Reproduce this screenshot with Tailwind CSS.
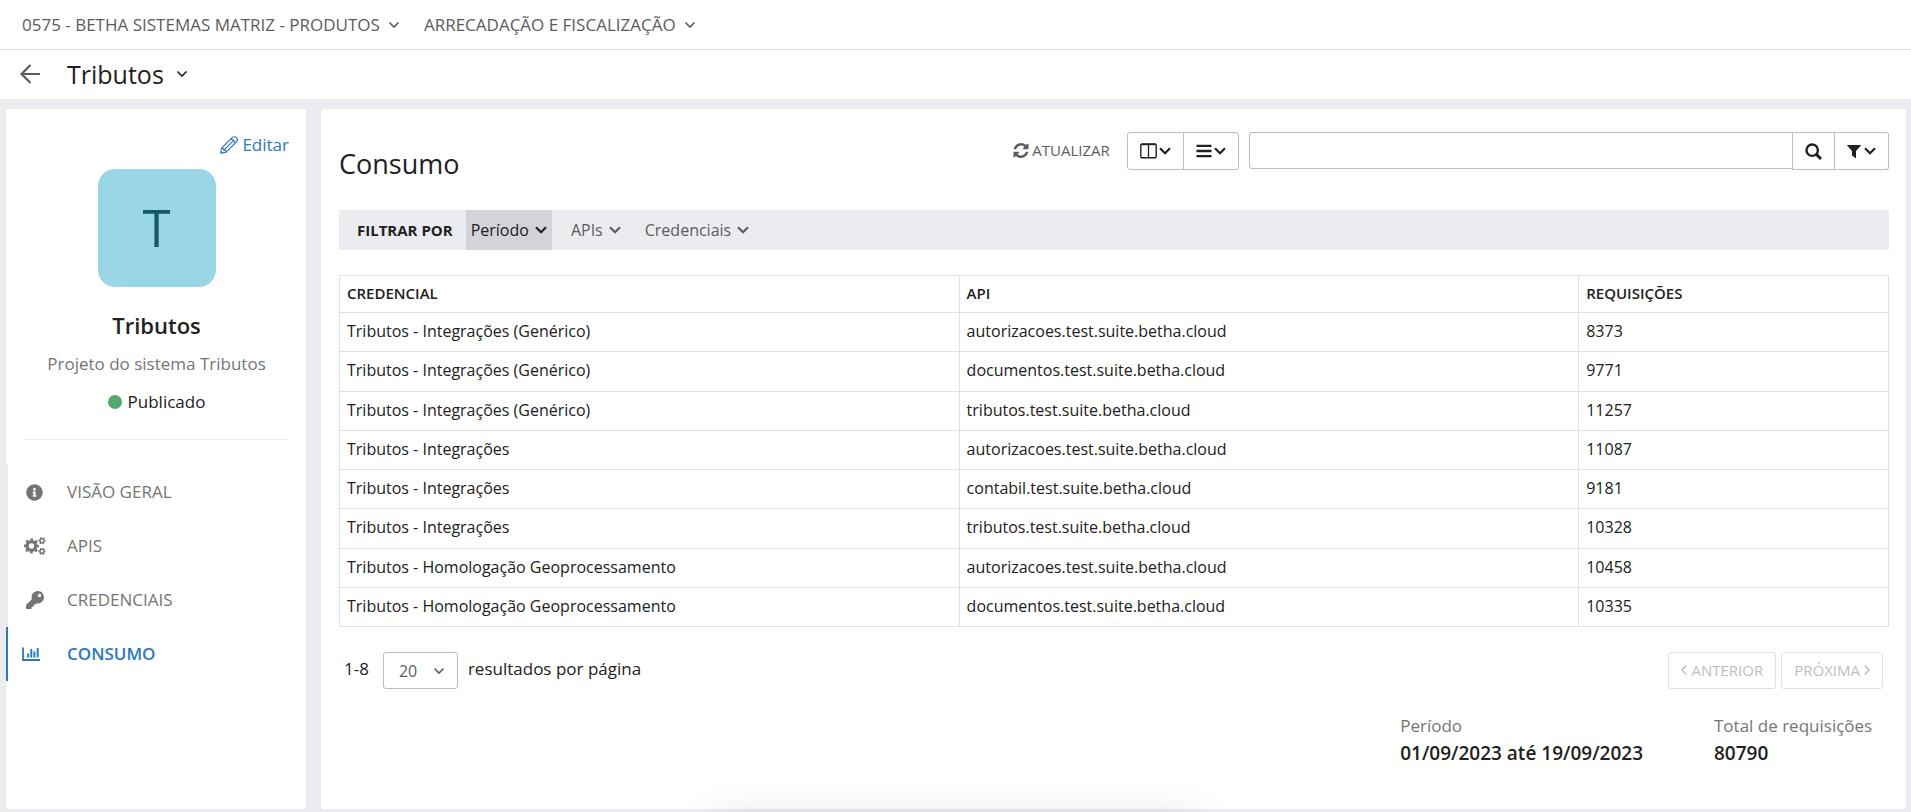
<!DOCTYPE html>
<html lang="pt-BR">
<head>
<meta charset="utf-8">
<title>Tributos - Consumo</title>
<script src="https://cdn.jsdelivr.net/npm/@tailwindcss/browser@4"></script>
</head>
<body class="flex min-h-screen flex-col bg-[#ebecf0] font-['Open_Sans',sans-serif] text-[16px] leading-6 text-[#212121]">

<svg class="hidden" aria-hidden="true">
  <symbol id="chevron" viewBox="0 0 12 8"><path d="M1 1.200l5 5 5-5" fill="none" stroke="currentColor" stroke-width="2.200"/></symbol>
  <symbol id="chevron-thin" viewBox="0 0 12 8"><path d="M1.500 1.500L6 6l4.500-4.500" fill="none" stroke="currentColor" stroke-width="1.600"/></symbol>
</svg>

<header class="bg-white">
  <nav aria-label="Contexto" class="flex h-[50px] items-center gap-6 border-b border-[#e0e0e4] px-[22px] text-[17px] text-[#5c5c5c]">
    <button type="button" class="flex items-center gap-2">0575 - BETHA SISTEMAS MATRIZ - PRODUTOS<svg class="h-2 w-3"><use href="#chevron-thin"/></svg></button>
    <button type="button" class="flex items-center gap-2">ARRECADAÇÃO E FISCALIZAÇÃO<svg class="h-2 w-3"><use href="#chevron-thin"/></svg></button>
  </nav>
  <div class="flex h-[49px] items-center px-5 pb-0.5">
    <a href="#" aria-label="Voltar" class="text-[#5c5c5c]"><svg class="h-5 w-5" viewBox="0 0 20 20" fill="none" stroke="currentColor" stroke-width="2.200"><path d="M20 10H1.500M10.500 1L1.500 10l9 9"/></svg></a>
    <button type="button" class="ml-[27px] flex items-center gap-3 text-[25px] leading-8">Tributos<svg class="h-2 w-3"><use href="#chevron-thin"/></svg></button>
  </div>
</header>

<div class="flex flex-1 gap-[15px] px-1.5 pt-2.5 pb-[3px] pr-[5px]">
  <aside class="w-[300px] shrink-0 rounded-[3px] bg-white">
    <div class="mr-[17px] ml-[18px] flex flex-col items-center border-b border-[#ebebed] pt-6 pb-[25px] text-[17px]">
      <a href="#" class="flex items-center gap-1 self-end text-[#2b78c5]"><svg class="h-[18px] w-[18px]" viewBox="0 0 18 18" fill="none" stroke="currentColor" stroke-width="1.200" stroke-linejoin="round"><path d="M.8 17.200l.8-5L12.200 1.600a2.800 2.800 0 0 1 4.200 4.200L5.800 16.400zM1.600 12.200c1.400-.2 2.300.4 2.300 1.900 1.500 0 2.200.8 1.900 2.300M3.900 14.100l9.500-9.500M10.700 3.100c2.100.2 4 2.100 4.200 4.200"/></svg>Editar</a>
      <div class="mt-3 flex h-[118px] w-[118px] items-center justify-center rounded-[17px] bg-[#9ad7e6] pb-0.5 text-[51px] leading-none text-[#17586b]">T</div>
      <h2 class="mt-[23px] text-[22px] leading-[30px] font-semibold">Tributos</h2>
      <p class="mt-3 text-[#757575]">Projeto do sistema Tributos</p>
      <p class="mt-3.5 flex items-center gap-1.5"><span class="h-3.5 w-3.5 rounded-full bg-[#54a86c]"></span>Publicado</p>
    </div>
    <nav aria-label="Projeto" class="mt-[25px] flex flex-col text-[17px] text-[#757575]">
      <a href="#" class="flex h-[54px] items-center border-l-2 border-[#ebebed] pl-4">
        <span class="flex w-[43px] pl-0.5"><svg class="h-[17px] w-[17px]" viewBox="0 0 512 512" fill="currentColor"><path d="M256 8C119.043 8 8 119.083 8 256c0 136.997 111.043 248 248 248s248-111.003 248-248C504 119.083 392.957 8 256 8zm0 110c23.196 0 42 18.804 42 42s-18.804 42-42 42-42-18.804-42-42 18.804-42 42-42zm56 254c0 6.627-5.373 12-12 12h-88c-6.627 0-12-5.373-12-12v-24c0-6.627 5.373-12 12-12h12v-64h-12c-6.627 0-12-5.373-12-12v-24c0-6.627 5.373-12 12-12h64c6.627 0 12 5.373 12 12v100h12c6.627 0 12 5.373 12 12v24z"/></svg></span>VISÃO GERAL</a>
      <a href="#" class="flex h-[54px] items-center border-l-2 border-[#ebebed] pl-4">
        <span class="flex w-[43px]"><svg class="h-[18px] w-[22px]" viewBox="0 0 22 18" fill="none" stroke="currentColor"><circle cx="7.500" cy="9" r="4.400" stroke-width="3.400"/><circle cx="7.500" cy="9" r="6.600" stroke-width="2" stroke-dasharray="2.600 2.584" stroke-dashoffset="1.300"/><circle cx="18" cy="3.700" r="2" stroke-width="1.500"/><circle cx="18" cy="3.700" r="3.100" stroke-width="1.100" stroke-dasharray="1.700 1.546" stroke-dashoffset=".85"/><circle cx="18" cy="14.300" r="2" stroke-width="1.500"/><circle cx="18" cy="14.300" r="3.100" stroke-width="1.100" stroke-dasharray="1.700 1.546" stroke-dashoffset=".85"/></svg></span>APIS</a>
      <a href="#" class="flex h-[54px] items-center border-l-2 border-[#ebebed] pl-4">
        <span class="flex w-[43px] pl-0.5"><svg class="h-[18px] w-[18px]" viewBox="0 0 512 512" fill="currentColor"><path d="M512 176.001C512 273.203 433.202 352 336 352c-11.220 0-22.190-1.062-32.827-3.069l-24.012 27.014A23.999 23.999 0 0 1 261.223 384H224v40c0 13.255-10.745 24-24 24h-40v40c0 13.255-10.745 24-24 24H24c-13.255 0-24-10.745-24-24v-78.059c0-6.365 2.529-12.470 7.029-16.971l161.802-161.802C163.108 213.814 160 195.271 160 176 160 78.798 238.797.001 335.999 0 433.488-.001 512 78.511 512 176.001zM336 128c0 26.510 21.490 48 48 48s48-21.490 48-48-21.490-48-48-48-48 21.490-48 48z"/></svg></span>CREDENCIAIS</a>
      <a href="#" aria-current="page" class="flex h-[54px] items-center border-l-2 border-[#2b78c5] pl-3.5 font-semibold text-[#2b78c5]">
        <span class="flex w-[45px]"><svg class="h-[14px] w-[18px]" viewBox="0 0 18 14" fill="none" stroke="currentColor"><path d="M1 .5V13h17" stroke-width="1.800"/><path d="M6.200 10.500V6.500M9.300 10.500V2M12.400 10.500V4.500M15.700 10.500V1" stroke-width="2"/></svg></span>CONSUMO</a>
    </nav>
  </aside>

  <main class="min-w-0 flex-1 rounded-[3px] bg-white pt-[23px] pr-[17px] pb-10 pl-[18px]">
    <div class="flex items-start">
      <h1 class="mt-3.5 mb-7 text-[27px] leading-9">Consumo</h1>
      <button type="button" class="ml-auto flex h-9 items-center gap-[3px] text-[15px] text-[#5c5c5c]"><svg class="h-[15px] w-4" viewBox="0 0 1536 1536" fill="currentColor"><path d="M1511 928q0 5-1 7-64 268-268 434.500t-478 166.500q-146 0-282.500-55t-243.500-157l-129 129q-19 19-45 19t-45-19-19-45v-448q0-26 19-45t45-19h448q26 0 45 19t19 45-19 45l-137 137q71 66 161 102t187 36q134 0 250-65t186-179q11-17 53-117 8-23 30-23h192q13 0 22.500 9.500t9.500 22.500zm25-800v448q0 26-19 45t-45 19h-448q-26 0-45-19t-19-45 19-45l138-138q-148-137-349-137-134 0-250 65t-186 179q-11 17-53 117-8 23-30 23h-199q-13 0-22.500-9.500t-9.500-22.500v-7q65-268 270-434.500t480-166.500q146 0 284 55.500t245 156.500l130-129q19-19 45-19t45 19 19 45z"/></svg>ATUALIZAR</button>
      <div class="ml-[17px] flex h-[38px] w-[112px] rounded-[3px] border border-[#bdbdbf]">
        <button type="button" aria-label="Colunas" class="flex w-14 items-center justify-center gap-0.5 border-r border-[#bdbdbf]"><svg class="h-4 w-[17px]" viewBox="0 0 17 16" fill="none" stroke="currentColor"><rect x=".8" y="1.200" width="15.400" height="13.600" rx="1" stroke-width="1.400"/><path d="M8.500 1v14" stroke-width="1.300"/><path d="M1 1.300h15" stroke-width="1.800"/></svg><svg class="h-2 w-3"><use href="#chevron"/></svg></button>
        <button type="button" aria-label="Densidade" class="flex flex-1 items-center justify-center gap-0.5"><svg class="h-4 w-4" viewBox="0 0 16 16" stroke="currentColor" stroke-width="2.300"><path d="M.5 2.800h15M.5 8h15M.5 13.200h15"/></svg><svg class="h-2 w-3"><use href="#chevron"/></svg></button>
      </div>
      <form class="ml-2.5 flex w-[41.300%] items-start" onsubmit="return false">
        <input type="search" aria-label="Pesquisar" class="h-[37px] min-w-0 flex-1 rounded-l-[3px] border border-r-0 border-[#bdbdbf] px-3 outline-none">
        <button type="submit" aria-label="Buscar" class="flex h-[38px] w-[43px] items-center justify-center border border-[#bdbdbf]"><svg class="h-[17px] w-[17px]" viewBox="0 0 17 17" fill="none" stroke="currentColor"><circle cx="7.200" cy="7.200" r="5.700" stroke-width="2.400"/><path d="M11.400 11.400l4.600 4.600" stroke-width="3"/></svg></button>
        <button type="button" aria-label="Filtros" class="flex h-[38px] w-[54px] items-center justify-center gap-[3px] rounded-r-[3px] border border-l-0 border-[#bdbdbf]"><svg class="h-[15px] w-[14px]" viewBox="0 0 14 15" fill="currentColor"><path d="M.6 1h12.800q.6.200.3.800L9 7v7.500L5 11.500V7L.3 1.800Q0 1.200.6 1z"/></svg><svg class="h-2 w-3"><use href="#chevron"/></svg></button>
      </form>
    </div>

    <div class="flex h-10 items-stretch bg-[#ebecf0] pl-[18px] text-[#5c5c5c]">
      <strong class="mr-[13px] self-center text-[15px] font-bold text-[#212121]">FILTRAR POR</strong>
      <button type="button" class="flex items-center gap-1.5 bg-[#d3d4d8] px-[5px] text-[#212121]">Período<svg class="h-2 w-3"><use href="#chevron"/></svg></button>
      <button type="button" class="ml-3.5 flex items-center gap-1.5 px-[5px]">APIs<svg class="h-2 w-3"><use href="#chevron"/></svg></button>
      <button type="button" class="ml-3.5 flex items-center gap-1.5 px-[5px]">Credenciais<svg class="h-2 w-3"><use href="#chevron"/></svg></button>
    </div>

    <table class="mt-[25px] h-[352px] w-full table-fixed border-collapse text-left [&_td]:border [&_td]:border-[#e0e0e4] [&_td]:px-[7px] [&_td]:pb-0.5 [&_th]:border [&_th]:border-[#e0e0e4] [&_th]:px-[7px] [&_th]:pb-0.5 [&_th]:text-[15px] [&_th]:font-semibold">
      <thead>
        <tr class="h-[37px]"><th class="w-[40%]" scope="col">CREDENCIAL</th><th class="w-[40%]" scope="col">API</th><th class="w-[20%]" scope="col">REQUISIÇÕES</th></tr>
      </thead>
      <tbody>
        <tr><td>Tributos - Integrações (Genérico)</td><td>autorizacoes.test.suite.betha.cloud</td><td>8373</td></tr>
        <tr><td>Tributos - Integrações (Genérico)</td><td>documentos.test.suite.betha.cloud</td><td>9771</td></tr>
        <tr><td>Tributos - Integrações (Genérico)</td><td>tributos.test.suite.betha.cloud</td><td>11257</td></tr>
        <tr><td>Tributos - Integrações</td><td>autorizacoes.test.suite.betha.cloud</td><td>11087</td></tr>
        <tr><td>Tributos - Integrações</td><td>contabil.test.suite.betha.cloud</td><td>9181</td></tr>
        <tr><td>Tributos - Integrações</td><td>tributos.test.suite.betha.cloud</td><td>10328</td></tr>
        <tr><td>Tributos - Homologação Geoprocessamento</td><td>autorizacoes.test.suite.betha.cloud</td><td>10458</td></tr>
        <tr><td>Tributos - Homologação Geoprocessamento</td><td>documentos.test.suite.betha.cloud</td><td>10335</td></tr>
      </tbody>
    </table>

    <div class="mt-[25px] flex items-start pr-1.5 pl-[5px] text-[17px] leading-[34px]">
      <span>1-8</span>
      <div class="relative ml-3.5">
        <select id="page-size" class="h-[37px] w-[75px] appearance-none rounded-[3px] border border-[#bdbdbf] bg-white pl-[15px] text-[16px] text-[#5c5c5c]"><option>20</option></select>
        <svg class="pointer-events-none absolute top-[15px] right-[13px] h-2 w-3 text-[#5c5c5c]"><use href="#chevron-thin"/></svg>
      </div>
      <label for="page-size" class="ml-2.5">resultados por página</label>
      <div class="ml-auto flex gap-[5px] text-[15px] text-[#bdbdbf]">
        <button type="button" disabled class="flex h-[37px] items-center gap-1 rounded-[3px] border border-[#e0e0e4] px-3 pb-0.5"><svg class="h-2.5 w-1.5" viewBox="0 0 6 10" fill="none" stroke="currentColor" stroke-width="1.500"><path d="M5.300.5L1 5l4.300 4.500"/></svg>ANTERIOR</button>
        <button type="button" disabled class="flex h-[37px] items-center gap-1 rounded-[3px] border border-[#e0e0e4] px-3 pb-0.5">PRÓXIMA<svg class="h-2.5 w-1.5" viewBox="0 0 6 10" fill="none" stroke="currentColor" stroke-width="1.500"><path d="M.7.5L5 5 .7 9.500"/></svg></button>
      </div>
    </div>

    <dl class="mt-6 flex justify-end gap-[71px] pr-3 text-[17px] leading-[26px]">
      <div><dt class="text-[#757575]">Período</dt><dd class="text-[19px] leading-7 font-semibold">01/09/2023 até 19/09/2023</dd></div>
      <div class="min-w-[163px]"><dt class="text-[#757575]">Total de requisições</dt><dd class="text-[19px] leading-7 font-semibold">80790</dd></div>
    </dl>
  </main>
</div>

<div class="pointer-events-none fixed top-full left-1/2 mt-2.5 h-20 w-[480px] -translate-x-1/2 shadow-[0_0_45px_rgba(0,0,0,0.15)]"></div>
</body>
</html>
